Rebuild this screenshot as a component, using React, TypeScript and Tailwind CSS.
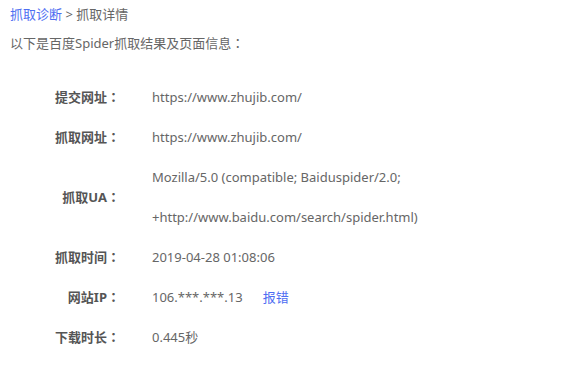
import React from "react";

const C = () => <span style={{ fontFamily: '"Noto Sans CJK TC", sans-serif' }}>：</span>;

const rows: { label: string; value: React.ReactNode }[] = [
  { label: "提交网址", value: "https://www.zhujib.com/" },
  { label: "抓取网址", value: "https://www.zhujib.com/" },
  {
    label: "抓取UA",
    value: (
      <>
        <div>Mozilla/5.0 (compatible; Baiduspider/2.0;</div>
        <div>+http://www.baidu.com/search/spider.html)</div>
      </>
    ),
  },
  { label: "抓取时间", value: "2019-04-28 01:08:06" },
  {
    label: "网站IP",
    value: (
      <>
        106.***.***.13<span className="ml-[20px] text-[#4e6ef2]">报错</span>
      </>
    ),
  },
  { label: "下载时长", value: "0.445秒" },
];

export default function App() {
  return (
    <div
      className="w-[576px] h-[381px] bg-white text-[13px] text-[#666]"
      style={{ fontFamily: '"Noto Sans", "Noto Sans CJK SC", sans-serif' }}
    >
      <div className="pl-[10px] pt-[3px] leading-[22px]">
        <span className="text-[#4e6ef2]">抓取诊断</span>
        <span> &gt; 抓取详情</span>
      </div>
      <div className="pl-[10px] pt-[7px] leading-[22px]">
        以下是百度Spider抓取结果及页面信息<C />
      </div>
      <div className="mt-[23px] flex flex-col">
        {rows.map((r, i) => (
          <div key={i} className="flex items-center">
            <div className="w-[120px] text-right font-bold text-[#555]">
              {r.label}
              <C />
            </div>
            <div className="ml-[32px] leading-[40px]">{r.value}</div>
          </div>
        ))}
      </div>
    </div>
  );
}
